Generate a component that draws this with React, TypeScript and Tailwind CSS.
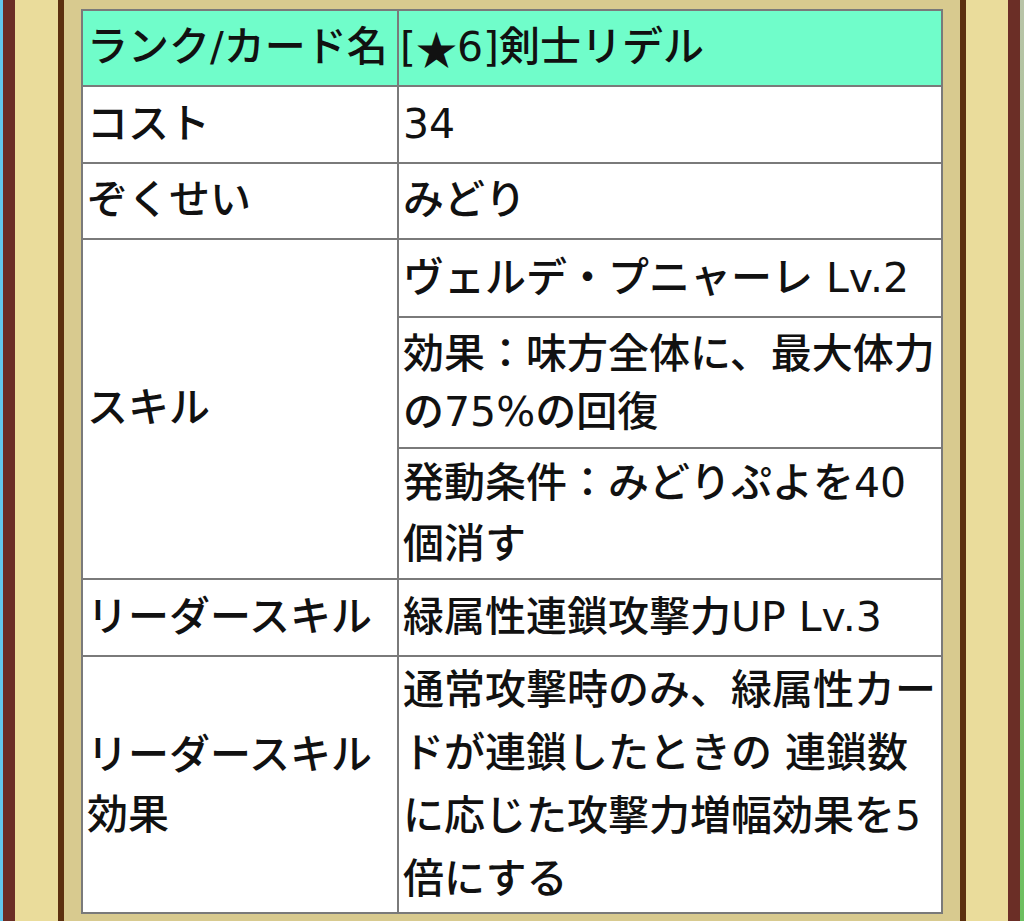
const font = { fontFamily: '"DejaVu Sans", "Noto Sans CJK JP", sans-serif' };

function Cell({ lines, h, leading }: { lines: string[]; h: string; leading: string }) {
  return (
    <div className={`flex items-center pl-[4px] ${h}`}>
      <div className={`whitespace-nowrap ${leading}`}>
        {lines.map((l, i) => (
          <div key={i}>{l}</div>
        ))}
      </div>
    </div>
  );
}

export default function App() {
  return (
    <div className="flex w-[1024px] h-[921px] overflow-hidden" style={font}>
      {/* left frame */}
      <div className="w-[3px] bg-[#62c8ee]" />
      <div className="w-[12px] bg-[#6b2e26]" />
      <div className="w-[43px] bg-[#eadc9b]" />
      <div className="w-[6px] bg-[#5c300f]" />

      {/* center */}
      <div className="flex-1 bg-[#d8ca8f] pt-[9px] px-[17px]">
        <div className="border-2 border-[#7a7a7a] bg-white text-[41px] font-medium text-[#111]">
          {/* header */}
          <div className="grid grid-cols-[316px_1fr] h-[76px] border-b-2 border-[#7a7a7a] bg-[#70fdca]">
            <div className="flex items-center pl-[4px] border-r-2 border-[#7a7a7a] whitespace-nowrap">ランク/カード名</div>
            <div className="flex items-center pl-[1px] whitespace-nowrap">
              [<span className="font-['Noto_Sans_CJK_JP']">★</span>6]剣士リデル
            </div>
          </div>

          <div className="grid grid-cols-[316px_1fr] h-[77px] border-b-2 border-[#7a7a7a]">
            <div className="flex items-center pl-[4px] border-r-2 border-[#7a7a7a]">コスト</div>
            <div className="flex items-center pl-[4px]">34</div>
          </div>

          <div className="grid grid-cols-[316px_1fr] h-[76px] border-b-2 border-[#7a7a7a]">
            <div className="flex items-center pl-[4px] border-r-2 border-[#7a7a7a]">ぞくせい</div>
            <div className="flex items-center pl-[4px]">みどり</div>
          </div>

          {/* skill */}
          <div className="grid grid-cols-[316px_1fr] h-[340px] border-b-2 border-[#7a7a7a]">
            <div className="flex items-center pl-[4px] border-r-2 border-[#7a7a7a]">スキル</div>
            <div className="flex flex-col">
              <div className="border-b-2 border-[#7a7a7a]">
                <Cell lines={["ヴェルデ・プニャーレ Lv.2"]} h="h-[76px]" leading="leading-[58px]" />
              </div>
              <div className="border-b-2 border-[#7a7a7a]">
                <Cell lines={["効果：味方全体に、最大体力", "の75%の回復"]} h="h-[129px]" leading="leading-[58px]" />
              </div>
              <Cell lines={["発動条件：みどりぷよを40", "個消す"]} h="h-[129px]" leading="leading-[61px]" />
            </div>
          </div>

          <div className="grid grid-cols-[316px_1fr] h-[77px] border-b-2 border-[#7a7a7a]">
            <div className="flex items-center pl-[4px] border-r-2 border-[#7a7a7a] whitespace-nowrap">リーダースキル</div>
            <div className="flex items-center pl-[4px] whitespace-nowrap">緑属性連鎖攻撃力UP Lv.3</div>
          </div>

          <div className="grid grid-cols-[316px_1fr] h-[255px]">
            <div className="flex items-center pl-[4px] border-r-2 border-[#7a7a7a]">
              <div className="leading-[60px]">
                <div>リーダースキル</div>
                <div>効果</div>
              </div>
            </div>
            <Cell
              lines={["通常攻撃時のみ、緑属性カー", "ドが連鎖したときの 連鎖数", "に応じた攻撃力増幅効果を5", "倍にする"]}
              h="h-[255px]"
              leading="leading-[63px]"
            />
          </div>
        </div>
      </div>

      {/* right frame */}
      <div className="w-[6px] bg-[#5c300f]" />
      <div className="w-[42px] bg-[#eadc9b]" />
      <div className="w-[12px] bg-[#6b2e26]" />
      <div className="w-[4px] bg-gradient-to-b from-[#b9c4a8] to-[#6cbf5e]" />
    </div>
  );
}
